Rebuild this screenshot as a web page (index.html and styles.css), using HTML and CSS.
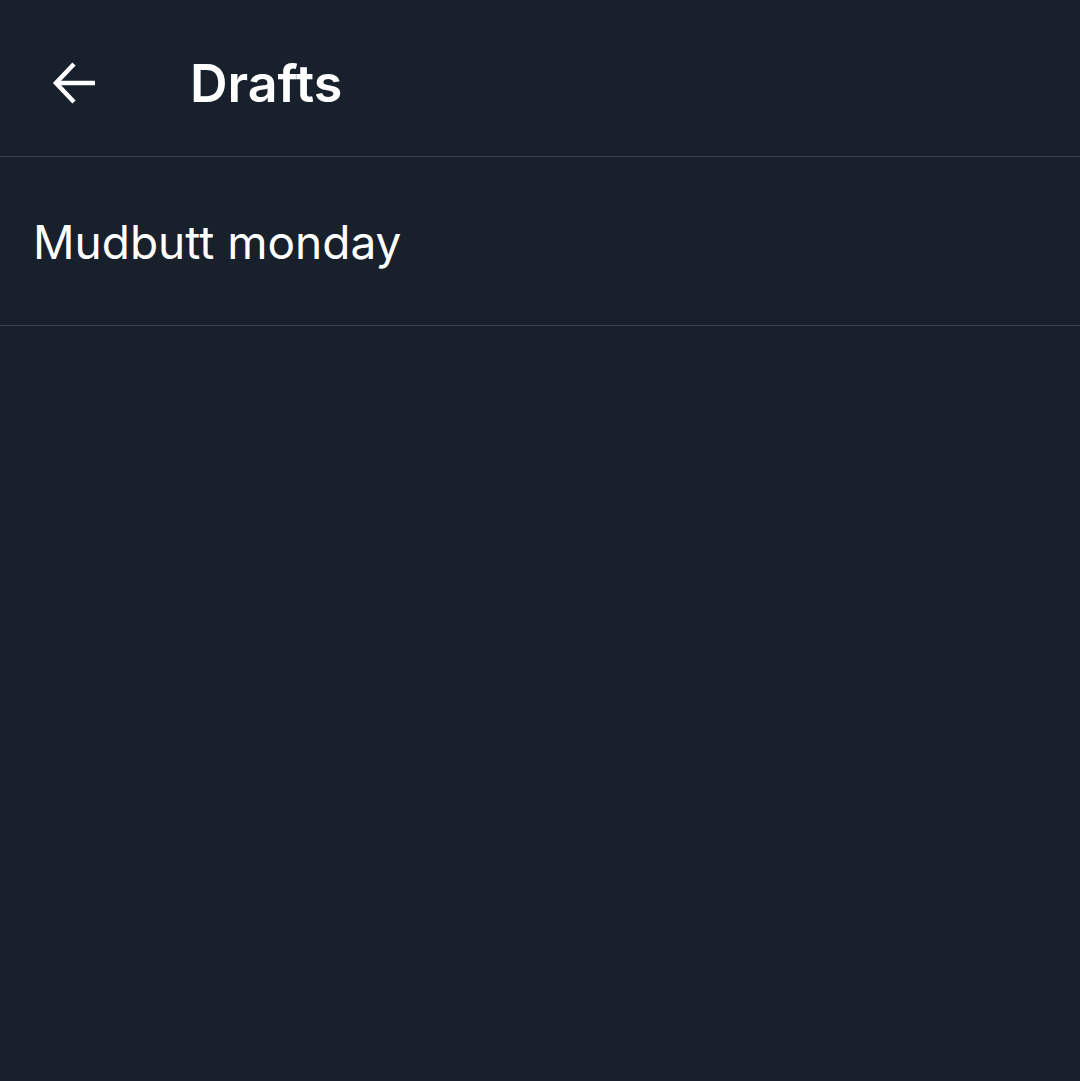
FILE: index.html
```html
<!DOCTYPE html>
<html>
<head>
<meta charset="utf-8">
<link rel="stylesheet" href="styles.css">
</head>
<body>
<header class="topbar">
  <button class="back" aria-label="Back">
    <svg width="44" height="44" viewBox="0 0 44 44" fill="none" stroke="#fff" stroke-width="4.5" stroke-linecap="butt">
      <path d="M43 22H4"/>
      <path d="M22 3L4 22L22 41"/>
    </svg>
  </button>
  <h1 class="title">Drafts</h1>
</header>
<ul class="drafts">
  <li class="draft">Mudbutt monday</li>
</ul>
</body>
</html>
```
FILE: styles.css
```css
html, body {
  margin: 0;
  padding: 0;
  background: #18202b;
  height: 100%;
}
body {
  font-family: Inter, "Noto Sans", "Liberation Sans", sans-serif;
  color: #ffffff;
}
.topbar {
  display: flex;
  align-items: center;
  height: 157px;
  border-bottom: 1px solid #3a414b;
  box-sizing: border-box;
  padding-left: 52px;
  padding-top: 10px;
}
.back {
  background: none;
  border: 0;
  padding: 0;
  width: 44px;
  height: 44px;
  display: flex;
  margin-top: 0;
}
.title {
  margin: 0 0 0 94px;
  font-size: 52px;
  font-weight: 600;
  letter-spacing: 0;
}
.drafts {
  list-style: none;
  margin: 0;
  padding: 0;
}
.draft {
  height: 169px;
  box-sizing: border-box;
  border-bottom: 1px solid #3a414b;
  padding-left: 33px;
  display: flex;
  align-items: center;
  font-size: 46px;
  font-weight: 400;
  padding-top: 2px;
}
```
